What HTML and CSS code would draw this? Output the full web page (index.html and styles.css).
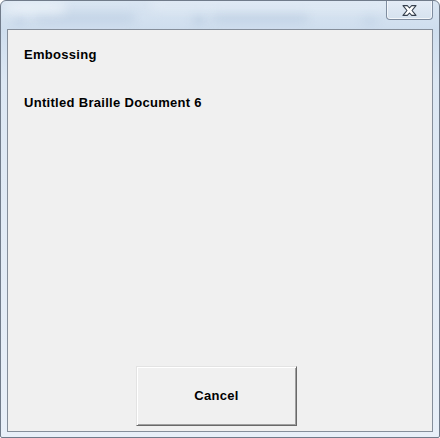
FILE: index.html
```html
<!DOCTYPE html>
<html>
<head>
<meta charset="utf-8">
<link rel="stylesheet" href="styles.css">
</head>
<body>
<div class="window">
  <div class="titlebar">
    <div class="blur">
      <span class="blob b1"></span>
      <span class="blob b2"></span>
      <span class="blob b3"></span>
      <span class="blob b4"></span>
      <span class="blob b5"></span>
      <span class="glow g1"></span>
      <span class="glow g2"></span>
    </div>
    <div class="close">
      <svg width="15" height="11" viewBox="0 0 15 11">
        <path d="M1 0.6 H5.3 L7.5 3 L9.7 0.6 H14 L10 5.5 L14 10.4 H9.7 L7.5 8 L5.3 10.4 H1 L5 5.5 Z" fill="#ffffff" stroke="#36404e" stroke-width="1.1" stroke-linejoin="round"/>
      </svg>
    </div>
  </div>
  <div class="client">
    <div class="label first">Embossing</div>
    <div class="label second">Untitled Braille Document 6</div>
    <div class="btnrow">
      <div class="button">Cancel</div>
    </div>
  </div>
</div>
</body>
</html>
```
FILE: styles.css
```css
html, body {
  margin: 0;
  padding: 0;
  background: #ffffff;
}
.window {
  width: 440px;
  height: 438px;
  box-sizing: border-box;
  border: 1px solid #707b8a;
  border-radius: 6px 6px 2px 2px;
  background: linear-gradient(to bottom, #d9e5f2 0px, #cfdeee 28px, #dce7f3 80px, #e8eff8 100%);
  display: flex;
  flex-direction: column;
  overflow: hidden;
}
.titlebar {
  height: 28px;
  display: flex;
  justify-content: flex-end;
  padding-right: 6px;
  position: relative;
}
.blur {
  position: absolute;
  left: 0;
  top: 0;
  right: 0;
  bottom: 0;
  overflow: hidden;
}
.blob {
  position: absolute;
  background: #aec3da;
  filter: blur(5px);
  border-radius: 4px;
  opacity: 0.5;
}
.glow {
  position: absolute;
  background: #f4f8fc;
  filter: blur(6px);
  border-radius: 8px;
  opacity: 0.8;
}
.g1 { left: 4px; top: 2px; width: 60px; height: 10px; }
.g2 { left: 150px; top: 0px; width: 240px; height: 8px; opacity: 0.5; }
.b1 { left: 14px; top: 15px; width: 10px; height: 9px; }
.b2 { left: 34px; top: 12px; width: 100px; height: 10px; opacity: 0.4; }
.b3 { left: 192px; top: 14px; width: 12px; height: 10px; }
.b4 { left: 212px; top: 12px; width: 95px; height: 10px; opacity: 0.4; }
.b5 { left: 362px; top: 15px; width: 14px; height: 9px; opacity: 0.35; }
.close {
  position: relative;
  margin-top: -1px;
  width: 47px;
  height: 20px;
  box-sizing: border-box;
  border: 1px solid #7f8da0;
  border-top: none;
  border-radius: 0 0 4px 4px;
  background: linear-gradient(to bottom, #e4ecf6, #d6e2ef);
  box-shadow: inset 0 -1px 0 rgba(255,255,255,0.7), inset 1px 0 0 rgba(255,255,255,0.6), inset -1px 0 0 rgba(255,255,255,0.6);
  display: flex;
  align-items: center;
  justify-content: center;
  padding-top: 1px;
}
.client {
  margin: 0 6px 5px 6px;
  height: 403px;
  box-sizing: border-box;
  border: 1px solid #858e9a;
  background: #f0f0f0;
  display: flex;
  flex-direction: column;
  padding: 17px 0 0 16px;
}
.label {
  font-family: "Liberation Sans", Arial, sans-serif;
  font-weight: bold;
  font-size: 13px;
  line-height: 15px;
  letter-spacing: 0.3px;
  color: #000000;
}
.second {
  margin-top: 33px;
}
.btnrow {
  margin-top: auto;
  margin-bottom: 5px;
  display: flex;
  padding-left: 112px;
}
.button {
  width: 161px;
  height: 60px;
  box-sizing: border-box;
  border-top: 1px solid #e3e3e3;
  border-left: 1px solid #e3e3e3;
  border-right: 1px solid #696969;
  border-bottom: 1px solid #696969;
  box-shadow: inset 1px 1px 0 #ffffff, inset -1px -1px 0 #a0a0a0;
  background: #f0f0f0;
  display: flex;
  align-items: center;
  justify-content: center;
  padding-bottom: 1px;
  font-family: "Liberation Sans", Arial, sans-serif;
  font-weight: bold;
  font-size: 13px;
  letter-spacing: 0.3px;
  color: #000000;
}
```
